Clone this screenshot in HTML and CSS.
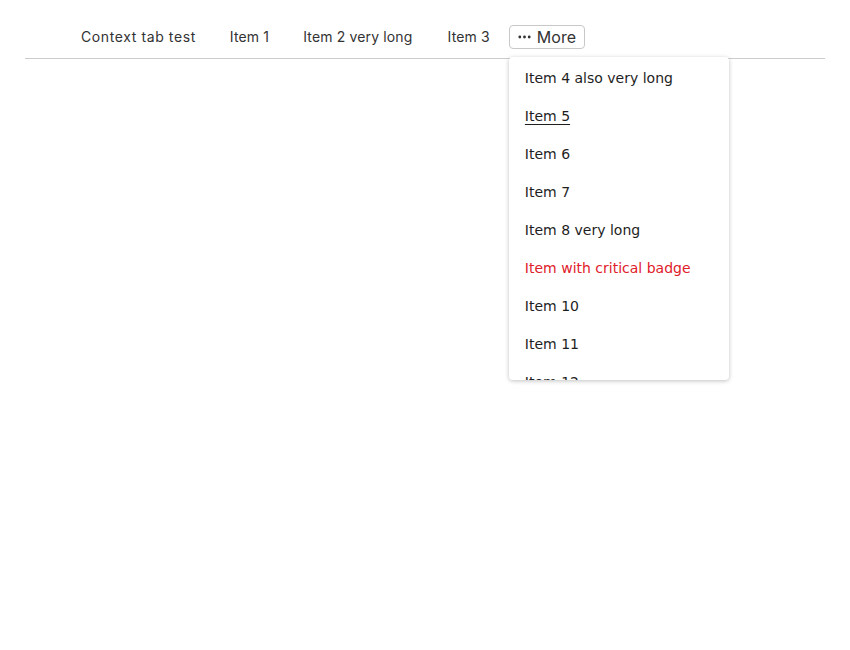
FILE: index.html
```html
<!DOCTYPE html>
<html>
<head>
<meta charset="utf-8">
<link rel="stylesheet" href="styles.css">
</head>
<body>
<div class="bar">
  <nav class="tabs">
    <span class="tab first">Context tab test</span>
    <span class="tab">Item 1</span>
    <span class="tab">Item 2 very long</span>
    <span class="tab third">Item 3</span>
    <div class="more-wrap">
      <button class="more"><svg width="13" height="4" viewBox="0 0 13 4"><circle cx="1.8" cy="2" r="1.4" fill="#333"/><circle cx="6.5" cy="2" r="1.4" fill="#333"/><circle cx="11.2" cy="2" r="1.4" fill="#333"/></svg><span>More</span></button>
      <div class="menu">
        <div class="mi">Item 4 also very long</div>
        <div class="mi u">Item 5</div>
        <div class="mi">Item 6</div>
        <div class="mi">Item 7</div>
        <div class="mi">Item 8 very long</div>
        <div class="mi crit">Item with critical badge</div>
        <div class="mi">Item 10</div>
        <div class="mi">Item 11</div>
        <div class="mi">Item 12</div>
        <div class="mi">Item 13</div>
      </div>
    </div>
  </nav>
</div>
</body>
</html>
```
FILE: styles.css
```css
html, body { margin: 0; padding: 0; background: #fff; }
html, body { min-height: 650px; }
body { font-family: Inter, "Liberation Sans", sans-serif; color: #333; }
.bar {
  margin: 0 25px;
  padding-top: 25px;
  height: 33px;
  border-bottom: 1px solid #ccc;
}
.tabs {
  display: flex;
  align-items: center;
  height: 24px;
  padding-left: 39px;
}
.tab {
  font-size: 14px;
  letter-spacing: 0.15px;
  padding: 0 17px;
  color: #333;
  white-space: nowrap;
  position: relative;
  top: -1px;
}
.tab.first { letter-spacing: 0.6px; }
.tab.third { padding-left: 18px; }
.more-wrap { position: relative; margin-left: 2px; }
.more {
  display: flex;
  align-items: center;
  gap: 6px;
  height: 24px;
  box-sizing: border-box;
  border: 1px solid #c8c8c8;
  border-radius: 4px;
  background: #fff;
  padding: 0 8px 0 8px;
  font-family: Inter, sans-serif;
  font-size: 16px;
  color: #333;
}
.menu {
  position: absolute;
  z-index: 5;
  top: 32px;
  left: 0;
  width: 220px;
  height: 323px;
  overflow: hidden;
  background: #fff;
  border-radius: 4px;
  box-shadow: 0 1px 4px rgba(0,0,0,0.25);
  padding-top: 2px;
  box-sizing: border-box;
}
.mi {
  height: 38px;
  line-height: 38px;
  padding: 0 16px;
  font-family: "DejaVu Sans", sans-serif;
  font-size: 14px;
  color: #1e1e1e;
  white-space: nowrap;
}
.mi.u { text-decoration: underline; text-underline-offset: 3px; }
.mi.crit { color: #e0202a; }
```
